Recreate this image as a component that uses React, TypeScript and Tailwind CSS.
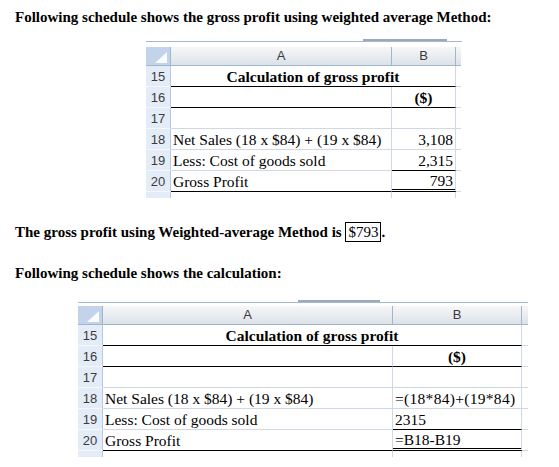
import React from "react";

type RowDef = {
  n: string;
  a?: React.ReactNode;
  b?: React.ReactNode;
  merged?: React.ReactNode;
  aCls?: string;
  bCls?: string;
};

function Corner() {
  return (
    <div className="w-[25px] h-full bg-[#c3d4ea] border-r border-b border-[#9eb6ce] relative">
      <svg width="25" height="19" viewBox="0 0 25 19" className="absolute left-0 top-0">
        <polygon points="21,5 21,16 9,16" fill="#ffffff" opacity="0.9" />
      </svg>
    </div>
  );
}

function Sheet({
  wrapCls,
  aW,
  bW,
  exW,
  gapCls,
  tabCls,
  rows,
}: {
  wrapCls: string;
  aW: string;
  bW: string;
  exW: string;
  gapCls: string;
  tabCls: string;
  rows: RowDef[];
}) {
  return (
    <div className={wrapCls}>
      <div className={"relative border-t border-[#a7b6c8] " + gapCls}>
        <div className={"absolute top-[-3px] h-[2px] bg-[#9aaabd] " + tabCls} />
      </div>
      {/* header row */}
      <div className="flex h-[19px] font-['Liberation_Sans',Arial,sans-serif] text-[13px] text-[#3a3a3a]">
        <Corner />
        <div className={"h-full flex items-center justify-center border-r border-b border-[#9eb6ce] bg-gradient-to-b from-[#f6f7f9] to-[#dde2e8] " + aW}>A</div>
        <div className={"h-full flex items-center justify-center border-r border-b border-[#9eb6ce] bg-gradient-to-b from-[#f6f7f9] to-[#dde2e8] " + bW}>B</div>
        <div className={"h-full border-b border-[#9eb6ce] bg-gradient-to-b from-[#f6f7f9] to-[#dde2e8] " + exW} />
      </div>
      {rows.map((r) => (
        <div key={r.n} className="flex h-[21px] text-[15.5px] leading-[17px]">
          <div className="w-[25px] h-full flex items-center justify-center bg-[#e4ecf7] border-r border-[#b9c9dd] border-b border-b-[#f4f7fb] font-['Liberation_Sans',Arial,sans-serif] text-[13px] text-[#3c3c3c]">
            {r.n}
          </div>
          {r.merged !== undefined ? (
            <div className={"h-full flex items-center justify-center font-bold border-b border-black border-r border-r-[#d0d7e5] whitespace-nowrap " + r.aCls}>
              {r.merged}
            </div>
          ) : (
            <>
              <div className={"h-full flex items-center pl-[2px] whitespace-nowrap border-r border-[#d0d7e5] border-b " + aW + " " + (r.aCls ?? "border-b-[#d0d7e5]")}>
                {r.a}
              </div>
              <div className={"h-full flex items-center whitespace-nowrap border-r border-[#d0d7e5] border-b " + bW + " " + (r.bCls ?? "border-b-[#d0d7e5]")}>
                {r.b}
              </div>
            </>
          )}
          <div className={"h-full border-b border-[#d0d7e5] " + exW} />
        </div>
      ))}
      <div className="flex h-[6px]">
        <div className="w-[25px] h-full bg-[#e4ecf7] border-r border-[#b9c9dd]" />
        <div className={"h-full border-r border-[#d0d7e5] " + aW} />
        <div className={"h-full border-r border-[#d0d7e5] " + bW} />
      </div>
    </div>
  );
}

export default function App() {
  const rows1: RowDef[] = [
    { n: "15", merged: "Calculation of gross profit", aCls: "w-[285px]" },
    { n: "16", a: "", b: <span className="w-full text-center font-bold">($)</span>, aCls: "border-b-black", bCls: "border-b-black" },
    { n: "17", a: "", b: "" },
    { n: "18", a: "Net Sales (18 x $84) + (19 x $84)", b: <span className="w-full text-right pr-[2px]">3,108</span> },
    { n: "19", a: "Less: Cost of goods sold", b: <span className="w-full text-right pr-[2px]">2,315</span>, bCls: "border-b-black" },
    { n: "20", a: "Gross Profit", b: <span className="w-full text-right pr-[2px]">793</span>, aCls: "border-b-black", bCls: "border-b-[3px] border-b-black border-double" },
  ];
  const rows2: RowDef[] = [
    { n: "15", merged: "Calculation of gross profit", aCls: "w-[419px]" },
    { n: "16", a: "", b: <span className="w-full text-center font-bold">($)</span>, aCls: "border-b-black", bCls: "border-b-black" },
    { n: "17", a: "", b: "" },
    { n: "18", a: "Net Sales (18 x $84) + (19 x $84)", b: <span className="pl-[2px] tracking-[0.3px]">=(18*84)+(19*84)</span> },
    { n: "19", a: "Less: Cost of goods sold", b: <span className="pl-[2px]">2315</span>, bCls: "border-b-black" },
    { n: "20", a: "Gross Profit", b: <span className="pl-[2px]">=B18-B19</span>, aCls: "border-b-black", bCls: "border-b-[3px] border-b-black border-double" },
  ];
  return (
    <div className="w-[559px] h-[467px] bg-white overflow-hidden text-black font-['Liberation_Serif','Times_New_Roman',serif]">
      <p className="pl-[15px] pt-[8px] text-[15px] leading-[18px] font-bold">
        Following schedule shows the gross profit using weighted average Method:
      </p>
      <Sheet
        wrapCls="ml-[146px] mt-[15px] w-[316px]"
        aW="w-[221px]"
        bW="w-[64px]"
        exW="w-[5px]"
        gapCls="h-[6px]"
        tabCls="left-[217px] w-[84px]"
        rows={rows1}
      />
      <p className="pl-[15px] mt-[23px] text-[15px] leading-[22px] font-bold">
        The gross profit using Weighted-average Method is{" "}
        <span className="inline-block border border-black px-[2px] leading-[18px] font-normal">$793</span>.
      </p>
      <p className="pl-[15px] mt-[21px] text-[15px] leading-[18px] font-bold">
        Following schedule shows the calculation:
      </p>
      <Sheet
        wrapCls="ml-[78px] mt-[20px] w-[450px]"
        aW="w-[290px]"
        bW="w-[129px]"
        exW="w-[6px]"
        gapCls="h-[4px]"
        tabCls="left-[220px] w-[82px]"
        rows={rows2}
      />
    </div>
  );
}
